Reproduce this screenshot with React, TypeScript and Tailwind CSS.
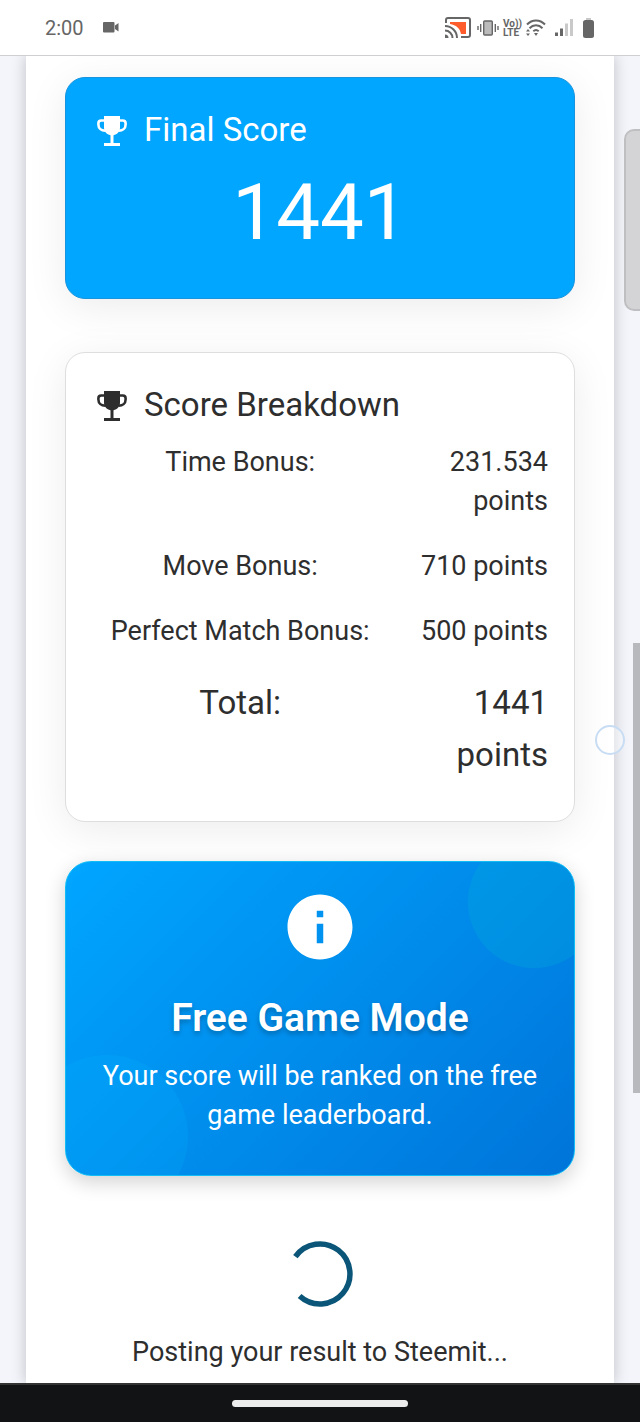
import type { ReactNode } from 'react';
import { MdInfo } from 'react-icons/md';

const bonuses = [
  { label: 'Time Bonus:', value: '231.534 points' },
  { label: 'Move Bonus:', value: '710 points' },
  { label: 'Perfect Match Bonus:', value: '500 points' },
];

function CameraIcon() {
  return (
    <svg width="16" height="11" viewBox="0 0 16 11" fill="#666">
      <rect width="11.500" height="10.500" rx="1" />
      <path d="M12 3.500L15.500 1v8.500L12 7z" />
    </svg>
  );
}

function CastIcon() {
  return (
    <svg width="26" height="22" viewBox="0 0 26 22" fill="none" stroke="#666" strokeWidth="2">
      <path d="M5 5h16v12h-5C15 11 11 8 5 7z" fill="#ff5c2b" stroke="none" />
      <path d="M1 6V3a2 2 0 0 1 2-2h20a2 2 0 0 1 2 2v15a2 2 0 0 1-2 2h-7" />
      <path d="M0 9a12 12 0 0 1 12 12M0 13.500A7.500 7.500 0 0 1 7.500 21" />
      <path d="M0 17.500A3.500 3.500 0 0 1 3.500 21H0z" fill="#666" stroke="none" />
    </svg>
  );
}

function VibrateIcon() {
  return (
    <svg width="22" height="16" viewBox="0 0 22 16" fill="none" stroke="#666" strokeWidth="1.400">
      <rect x="6.700" y="1" width="8.600" height="14" rx="1" fill="#bbb" />
      <path d="M3.700 4v8M18.300 4v8M1 6v4M21 6v4" />
    </svg>
  );
}

function WifiIcon() {
  return (
    <svg width="20" height="18" viewBox="0 0 20 18" fill="none" stroke="#666" strokeWidth="2">
      <path d="M1 5.500C6 0 14 0 19 5.500M3.500 9.200c3.700-3.800 9.300-3.800 13 0M7.300 12.200c1.600-1.500 3.800-1.500 5.400 0" />
      <path d="M8 14h4l-2 3zM0 12.500h4L2 10zM0 14.500h4L2 17z" fill="#666" stroke="none" />
    </svg>
  );
}

function SignalIcon() {
  return (
    <svg width="18" height="17" viewBox="0 0 18 17">
      <path d="M0 13.500h3V17H0zM5 9.500h3V17H5z" fill="#666" />
      <path d="M10 4.500h3V17h-3zM15 0h3v17h-3z" fill="#c9c9c9" />
    </svg>
  );
}

function BatteryIcon() {
  return (
    <svg width="11" height="20" viewBox="0 0 11 20">
      <path d="M3 0h5v2H3z" fill="#c9c9c9" />
      <rect y="2" width="11" height="18" rx="2.500" fill="#666" />
    </svg>
  );
}

function TrophyIcon() {
  return (
    <svg width="39" height="39" viewBox="0 0 39 39" fill="currentColor">
      <path d="M12 5h16v11.500c0 4-2.600 6.900-6.500 7.700V32H28v3H12v-3h6.500v-7.800C14.600 23.400 12 20.500 12 16.500z" />
      <path
        d="M12.500 9.500H9.200a2.800 2.800 0 0 0-2.800 2.800v1.200c0 3.800 3 6.200 6.800 6.200M27.500 9.500h3.300a2.800 2.800 0 0 1 2.800 2.800v1.200c0 3.800-3 6.200-6.800 6.200"
        fill="none"
        stroke="currentColor"
        strokeWidth="2.600"
      />
    </svg>
  );
}

function StatusBar() {
  return (
    <header className="relative z-10 flex h-14 items-center justify-between border-b border-[#cfcfd1] bg-white pr-[46px] pl-[45px] text-[#666]">
      <div className="flex items-center gap-[19px]">
        <span className="text-[20px]">2:00</span>
        <CameraIcon />
      </div>
      <div className="flex items-center">
        <CastIcon />
        <div className="ml-[6px]">
          <VibrateIcon />
        </div>
        <div className="ml-1 flex w-5 flex-col text-[10px] leading-[9px] font-bold">
          <span>Vo))</span>
          <span>LTE</span>
        </div>
        <div className="ml-[3px]">
          <WifiIcon />
        </div>
        <div className="ml-[9px]">
          <SignalIcon />
        </div>
        <div className="ml-[10px]">
          <BatteryIcon />
        </div>
      </div>
    </header>
  );
}

function CardTitle({ children }: { children: ReactNode }) {
  return (
    <h2 className="flex items-center gap-[13px] text-[33px] leading-[52px]">
      <TrophyIcon />
      {children}
    </h2>
  );
}

function FinalScore() {
  return (
    <section className="rounded-[20px] border border-[#1894dd] bg-[#00a6ff] px-[26px] pt-[26px] pb-10 text-white shadow-[0_8px_40px_rgba(0,0,0,0.08)]">
      <CardTitle>Final Score</CardTitle>
      <p className="mt-[11px] text-center text-[78px] leading-[91px]">1441</p>
    </section>
  );
}

function ScoreBreakdown() {
  return (
    <section className="mt-[53px] rounded-[20px] border border-[#dedede] bg-white p-[26px] shadow-[0_8px_40px_rgba(0,0,0,0.08)]">
      <CardTitle>Score Breakdown</CardTitle>
      <table className="w-full table-fixed text-[27px] leading-[39px]">
        <tbody>
          {bonuses.map((bonus) => (
            <tr key={bonus.label}>
              <th scope="row" className="w-[65%] pt-3 pb-[14px] align-top font-normal">
                {bonus.label}
              </th>
              <td className="w-[35%] pt-3 pb-[14px] text-right align-top">{bonus.value}</td>
            </tr>
          ))}
          <tr className="text-[33px] leading-[52px]">
            <th scope="row" className="pt-3 pb-[14px] align-top font-normal">
              Total:
            </th>
            <td className="pt-3 pb-[14px] text-right align-top">1441 points</td>
          </tr>
        </tbody>
      </table>
    </section>
  );
}

function FreeGameMode() {
  return (
    <section className="relative mt-[39px] flex flex-col items-center overflow-hidden rounded-[26px] border border-[#12bdf5] bg-linear-135 from-[#00a6ff] to-[#0074d9] px-[26px] pt-[26px] pb-10 text-center text-white shadow-[0_6px_20px_rgba(0,0,0,0.18)]">
      {/* decorative bubbles */}
      <div className="absolute -top-[26px] -right-[26px] size-[132px] rounded-full bg-[#00b4d8]/25" />
      <div className="absolute -bottom-[42px] -left-[40px] size-[162px] rounded-full bg-[#00b4ff]/20" />
      <MdInfo size={78} className="relative" />
      <h2 className="relative mt-[26px] text-[39px] leading-[52px] font-semibold text-shadow-[0_3px_5px_rgba(0,0,0,0.25)]">
        Free Game Mode
      </h2>
      <p className="relative mt-[13px] text-[27px] leading-[39px]">
        Your score will be ranked on the free game leaderboard.
      </p>
    </section>
  );
}

function PostingStatus() {
  return (
    <div role="status" className="mt-[65px] flex flex-col items-center gap-[26px]">
      <svg width="66" height="66" viewBox="0 0 66 66" fill="none" stroke="#0a5578" strokeWidth="5.500">
        <path d="M8.400 15.700A30 30 0 1 1 12.600 55" />
      </svg>
      <p className="text-center text-[27px] leading-[39px]">Posting your result to Steemit...</p>
    </div>
  );
}

export default function App() {
  return (
    <div className="relative flex min-h-screen flex-col overflow-hidden bg-[#f4f5fb] font-[Roboto,sans-serif] text-[#2e2e2e]">
      <StatusBar />

      <main className="mx-[26px] grow bg-white px-[39px] pt-[21px] pb-[11px] shadow-[0_0_14px_rgba(0,0,0,0.22)]">
        <FinalScore />
        <ScoreBreakdown />
        <FreeGameMode />
        <PostingStatus />
      </main>

      <footer className="relative z-10 flex h-[39px] items-center justify-center border-t-2 border-[#333] bg-[#121315]">
        <div className="h-[7px] w-44 rounded-full bg-[#ececec]" />
      </footer>

      {/* edge panel handle, scrollbar and touch indicator */}
      <div className="absolute top-[129px] right-0 h-[182px] w-4 rounded-l-[10px] border-2 border-r-0 border-[#bfbfc2] bg-[#d4d4d6]" />
      <div className="absolute top-[643px] right-0 h-[450px] w-[7px] bg-[#b7b9bc]" />
      <div className="absolute top-[725px] right-[15px] size-[30px] rounded-full border-2 border-[#c8ddf3] bg-white/40" />
    </div>
  );
}
